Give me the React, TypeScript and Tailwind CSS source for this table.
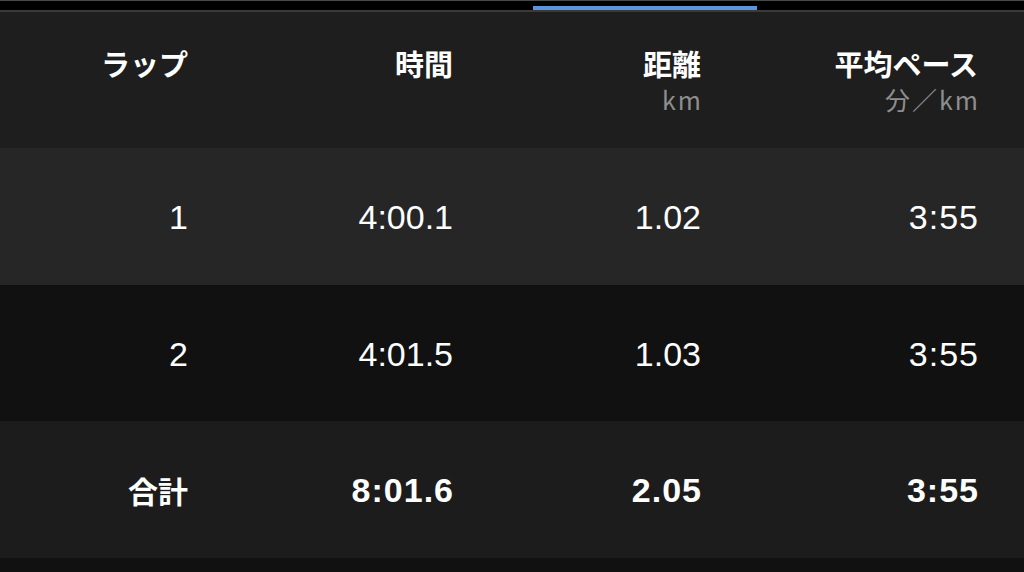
import React from "react";

const jp = "font-['Noto_Sans_CJK_JP',sans-serif]";
const num = "font-['Liberation_Sans','Noto_Sans_CJK_JP',sans-serif]";

const rows = [
  { lap: "1", time: "4:00.1", dist: "1.02", pace: "3:55", bg: "bg-[#262626]", h: "h-[137px]" },
  { lap: "2", time: "4:01.5", dist: "1.03", pace: "3:55", bg: "bg-[#111111]", h: "h-[136px]" },
];

export default function App() {
  return (
    <div className="w-[1024px] h-[572px] bg-[#111111] overflow-hidden">
      <div className="h-[10px] bg-black border-t border-[#4a4a4a] flex items-end">
        <div className="ml-[533px] w-[224px] h-[4px] bg-[#5a95dc]" />
      </div>
      <div className="h-[2px] bg-[#3a3a3a]" />
      <div className="h-[136px] bg-[#1e1e1e] grid grid-cols-[188px_265px_248px_277px] pt-[30px] text-right">
        {[
          ["ラップ", ""],
          ["時間", ""],
          ["距離", "km"],
          ["平均ペース", "分／km"],
        ].map(([t, s], i) => (
          <div key={i} className="flex flex-col items-end">
            <div className={`${jp} font-bold text-white text-[29px] leading-[42px]`}>{t}</div>
            {s && (
              <div className={`${jp} text-[#8e8e8e] text-[25px] leading-[30px] tracking-[2px] -mr-[2px]`}>{s}</div>
            )}
          </div>
        ))}
      </div>
      {rows.map((r, i) => (
        <div key={i} className={`${r.h} ${r.bg} grid grid-cols-[188px_265px_248px_277px] items-center text-right text-white ${num} text-[34px] pt-[2px]`}>
          <div>{r.lap}</div>
          <div>{r.time}</div>
          <div>{r.dist}</div>
          <div className="tracking-[1px] -mr-[1px]">{r.pace}</div>
        </div>
      ))}
      <div className={`h-[137px] bg-[#1c1c1c] grid grid-cols-[188px_265px_248px_277px] items-center text-right text-white font-bold pt-[2px]`}>
        <div className={`${jp} text-[30px]`}>合計</div>
        <div className={`${num} text-[34px] tracking-[1px] -mr-[1px]`}>8:01.6</div>
        <div className={`${num} text-[34px] tracking-[1px] -mr-[1px]`}>2.05</div>
        <div className={`${num} text-[34px] tracking-[1px] -mr-[1px]`}>3:55</div>
      </div>
    </div>
  );
}
